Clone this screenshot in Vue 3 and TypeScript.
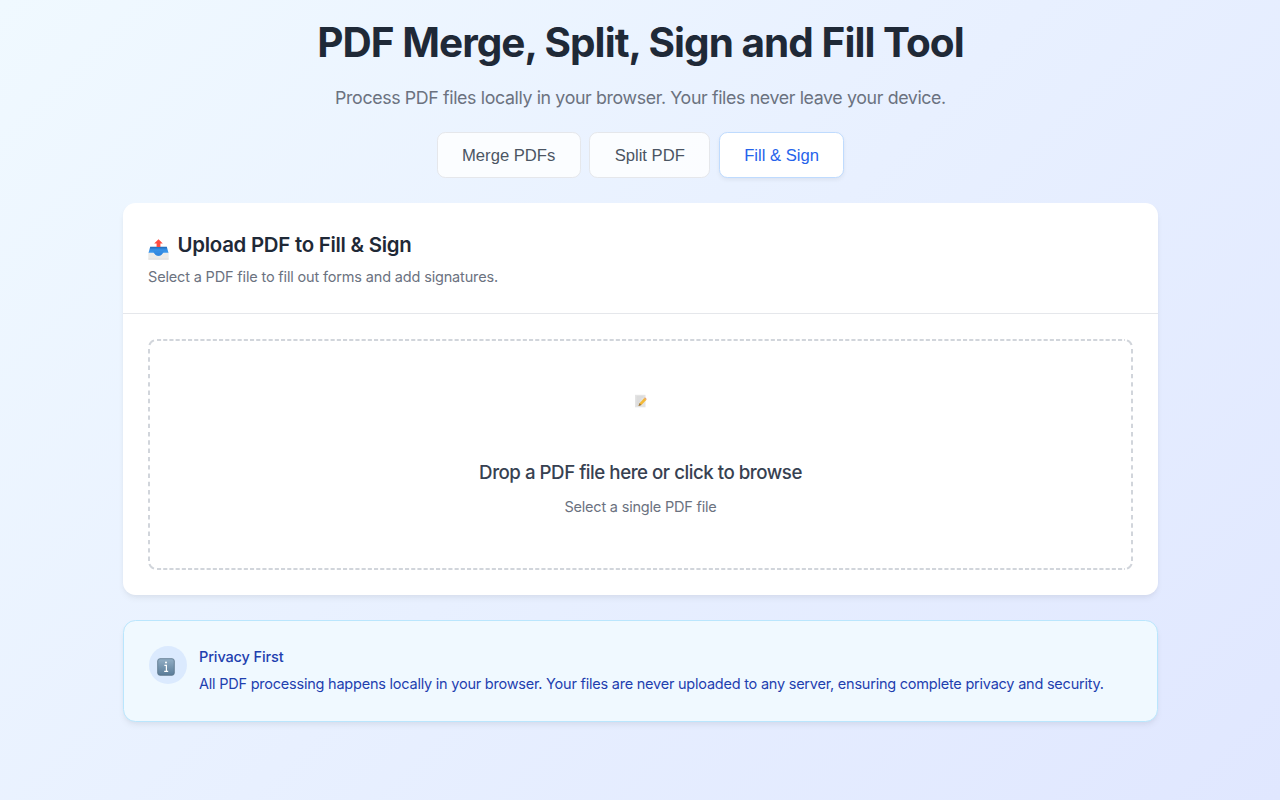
<script setup lang="ts">
import { ref } from 'vue'

const tabs: string[] = ['Merge PDFs', 'Split PDF', 'Fill & Sign']
const active = ref('Fill & Sign')
</script>

<template>
  <main class="page">
    <header class="hero">
      <h1><span>PDF Merge, Split, Sign and Fill Tool</span></h1>
      <p class="lead"><span>Process PDF files locally in your browser. Your files never leave your device.</span></p>
    </header>

    <nav class="tabs">
      <button v-for="tab in tabs" :key="tab" class="tab" :class="{ active: tab === active }" @click="active = tab">{{ tab }}</button>
    </nav>

    <section class="card">
      <div class="card-head">
        <h2>
          <svg class="tray" viewBox="0 0 21 21">
            <defs>
              <linearGradient id="trayBlue" x1="0" y1="0" x2="0" y2="1">
                <stop offset="0" stop-color="#2268b4" />
                <stop offset=".4" stop-color="#348be0" />
                <stop offset="1" stop-color="#3f9bf0" />
              </linearGradient>
            </defs>
            <path d="M2.200 7.800h16.600l1.700 6.200H.5z" fill="url(#trayBlue)" />
            <path d="M5 12h11l-2.500 5h-6z" fill="#368de3" />
            <path d="M.3 13.700h5.200c1 0 1.200 3 5 3s4-3 5-3h5.200v6.600H.3z" fill="#ecebe9" />
            <path d="M6 14c1.200.5 1.600 2.700 4.500 2.700S13.800 14.500 15 14z" fill="#3388df" />
            <path d="M.3 20.200h20.400" stroke="#d8d7d5" stroke-width=".7" />
            <path d="M10.500 .3l4.300 4.100h-2.400v3.500H8.600V4.400H6.200z" fill="#ff4c40" />
          </svg>
          <span>Upload PDF to Fill &amp; Sign</span>
        </h2>
        <p><span>Select a PDF file to fill out forms and add signatures.</span></p>
      </div>
      <div class="card-body">
        <div class="drop">
          <svg class="outline" viewBox="0 0 985 231">
            <g fill="none" stroke="#d1d5db" stroke-width="2">
              <path d="M9 1H977M9 230H977" stroke-dasharray="4.100 2.100" />
              <path d="M1 10V222M984 10V222" stroke-dasharray="4.400 3.900" />
              <path d="M1.400 6Q2.500 2.500 6 1.400M979 1.400Q982.500 2.500 983.600 6M1.400 225Q2.500 228.500 6 229.600M979 229.600Q982.500 228.500 983.600 225" />
            </g>
          </svg>
          <svg class="memo" viewBox="0 0 13 14">
            <rect x="1" y=".8" width="10.500" height="12.500" fill="#e4e4e4" />
            <path d="M2.500 3h7M2.500 5h5M2.500 7h4M2.500 9h3M2.500 11h3" stroke="#cfcfcf" stroke-width=".8" />
            <path d="M4.500 12l1-2.700 4.800-5.200 2 1.800-4.900 5.200z" fill="#f3b936" />
            <path d="M10.300 4.100l.6-.8 1.800 1.600-.6 1z" fill="#eb9b68" />
            <path d="M4.500 12l1-2.700 1.900 1.800z" fill="#8d714d" />
          </svg>
          <h3><span>Drop a PDF file here or click to browse</span></h3>
          <p><span>Select a single PDF file</span></p>
        </div>
      </div>
    </section>

    <section class="notice">
      <div class="badge">
        <svg class="info" viewBox="0 0 18 18">
          <defs>
            <linearGradient id="infoFill" x1="0" y1="0" x2="0" y2="1">
              <stop offset="0" stop-color="#92aec5" />
              <stop offset="1" stop-color="#5a7c98" />
            </linearGradient>
          </defs>
          <rect x=".7" y=".7" width="16.600" height="16.600" rx="2.300" fill="url(#infoFill)" stroke="#587287" stroke-width=".8" />
          <path d="M7.400 7.300h2v5.900M7.200 13.300h4" stroke="#fff" stroke-width="1.200" fill="none" />
          <circle cx="9" cy="4.600" r="1" fill="#fff" />
        </svg>
      </div>
      <div class="notice-text">
        <h4><span>Privacy First</span></h4>
        <p><span>All PDF processing happens locally in your browser. Your files are never uploaded to any server, ensuring complete privacy and security.</span></p>
      </div>
    </section>
  </main>
</template>

<style>
body {
  margin: 0;
}
</style>

<style scoped>
.page {
  box-sizing: border-box;
  height: 800px;
  overflow: hidden;
  padding: 17px 122px 0 123px;
  background: linear-gradient(135deg, #f0f9ff 0%, #e0e7ff 100%);
  font-family: Inter, "Liberation Sans", sans-serif;
}
h1, h2, h3, h4, p {
  margin: 0;
}
.hero {
  text-align: center;
}
h1 {
  font-size: 40.500px;
  line-height: 52px;
  font-weight: 700;
  letter-spacing: -0.960px;
  color: #1f2937;
  white-space: nowrap;
}
.lead {
  margin-top: 14px;
  font-size: 17.800px;
  line-height: 30px;
  letter-spacing: -0.375px;
  color: #6b7280;
}
.tabs {
  display: flex;
  justify-content: center;
  gap: 8.300px;
  margin-top: 19px;
}
.tab {
  box-sizing: border-box;
  height: 46px;
  padding: 2px 24.500px 0;
  border: 1px solid #e5e7eb;
  border-radius: 8.300px;
  background: rgba(255, 255, 255, 0.8);
  color: #4b5563;
  font: 500 16.640px "Liberation Sans", Arial, sans-serif;
}
.tab.active {
  background: #fff;
  color: #2563eb;
  border-color: #bfdbfe;
  box-shadow: 0 2px 4px rgba(0, 0, 0, 0.06);
}
.card {
  box-sizing: border-box;
  height: 392px;
  margin-top: 25px;
  border-radius: 12.500px;
  background: #fff;
  box-shadow: 0 4px 7px -1px rgba(0, 0, 0, 0.06), 0 2px 4px -1px rgba(0, 0, 0, 0.03);
}
.card-head {
  box-sizing: border-box;
  height: 111px;
  padding: 26px 25px 0;
  border-bottom: 1px solid #e5e7eb;
}
h2 {
  display: flex;
  align-items: center;
  gap: 8.500px;
  font-size: 20.400px;
  line-height: 32px;
  font-weight: 600;
  letter-spacing: -0.260px;
  color: #1f2937;
}
.tray {
  width: 21px;
  height: 21px;
  margin-top: 9px;
}
.card-head p {
  margin-top: 4px;
  font-size: 14.500px;
  line-height: 24px;
  letter-spacing: -0.160px;
  color: #6b7280;
}
.card-body {
  padding: 25px;
}
.drop {
  position: relative;
  height: 231px;
  display: flex;
  flex-direction: column;
  align-items: center;
}
.outline {
  position: absolute;
  inset: 0;
  width: 100%;
  height: 231px;
}
.memo {
  width: 13px;
  height: 14px;
  margin-top: 55px;
}
h3 {
  margin-top: 50px;
  font-size: 18.700px;
  line-height: 30px;
  font-weight: 500;
  letter-spacing: -0.470px;
  color: #374151;
}
.drop p {
  margin-top: 7px;
  font-size: 14.500px;
  line-height: 24px;
  letter-spacing: -0.200px;
  color: #6b7280;
}
.notice {
  box-sizing: border-box;
  height: 101.500px;
  margin-top: 25px;
  padding: 25px 24px;
  display: flex;
  gap: 12.500px;
  border: 1px solid #bae6fd;
  border-radius: 12.500px;
  background: #f0f9ff;
  box-shadow: 0 4px 7px -1px rgba(0, 0, 0, 0.06), 0 2px 4px -1px rgba(0, 0, 0, 0.03);
}
.badge {
  box-sizing: border-box;
  width: 38px;
  height: 38px;
  flex: none;
  margin-left: 0.500px;
  padding: 12px 0 0 8px;
  border-radius: 50%;
  background: #dbeafe;
}
.info {
  display: block;
  width: 18px;
  height: 18px;
}
.notice-text {
  color: #1e40af;
  white-space: nowrap;
}
h4 {
  font-size: 14.500px;
  line-height: 22px;
  font-weight: 500;
  letter-spacing: -0.120px;
}
.notice p {
  margin-top: 3px;
  font-size: 14.500px;
  line-height: 25px;
  letter-spacing: -0.225px;
}
</style>
